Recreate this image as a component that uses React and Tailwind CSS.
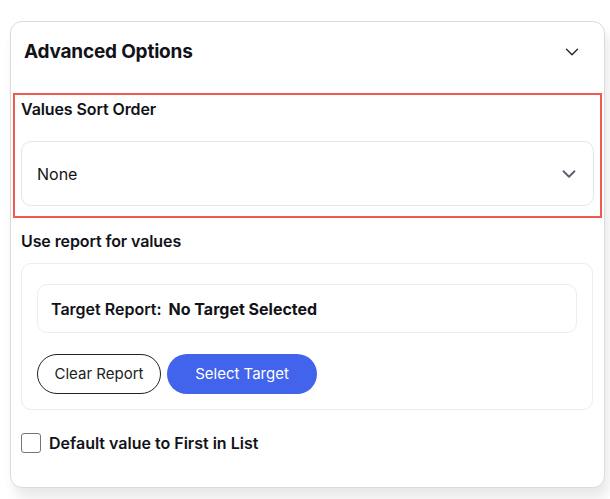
import React, { useState } from "react";
import { ChevronDown } from "lucide-react";

const App = () => {
  const [sortOrder] = useState("None");
  const [defaultFirst, setDefaultFirst] = useState(false);

  return (
    <div
      className="min-h-[499px] w-[610px] bg-white pt-[21px] pl-[10px] text-[#111318]"
      style={{ fontFamily: "Inter, 'Noto Sans', sans-serif" }}
    >
      <div className="w-[595px] rounded-xl border border-[#dadada] bg-white px-[10px] pb-[32px] shadow-[4px_10px_12px_rgba(0,0,0,0.09)]">
        {/* header */}
        <div className="flex h-[58px] items-center justify-between pt-[2px] pl-[3px] pr-[11px]">
          <h2 className="text-[19px] font-bold tracking-[-0.2px]">Advanced Options</h2>
          <ChevronDown size={22} strokeWidth={1.4} className="text-[#222]" />
        </div>

        {/* highlighted section */}
        <div className="-mx-[8px] mt-[13px] border-2 border-[#ef5b52] px-[6px] pt-[4px] pb-[10px]">
          <div className="text-[16px] font-semibold leading-5 tracking-[-0.1px]">Values Sort Order</div>
          <div className="mt-[22px] flex h-[65px] items-center justify-between rounded-[10px] border border-[#e6e6e6] pl-[15px] pr-[13px]">
            <span className="text-[16px]">{sortOrder}</span>
            <ChevronDown size={22} strokeWidth={2} className="text-[#5a606a]" />
          </div>
        </div>

        <div className="mt-[13px] text-[16px] font-semibold leading-5 tracking-[-0.1px]">Use report for values</div>

        <div className="mt-[12px] mr-[1px] rounded-[10px] border border-[#ececec] px-[15px] pt-[20px] pb-[15px]">
          <div className="flex h-[49px] items-center rounded-[10px] border border-[#ececec] px-[13px] text-[16px]">
            <span className="font-semibold">Target Report:</span>
            <span className="ml-[7px] font-bold">No Target Selected</span>
          </div>
          <div className="mt-[21px] flex gap-[6px]">
            <button className="h-[40px] w-[124px] rounded-full border border-[#222] text-[15px] text-[#222]">
              Clear Report
            </button>
            <button className="h-[40px] w-[150px] rounded-full bg-[#4263eb] text-[15px] text-white">
              Select Target
            </button>
          </div>
        </div>

        <label className="mt-[21px] flex items-center gap-[8px]">
          <input
            type="checkbox"
            checked={defaultFirst}
            onChange={(e) => setDefaultFirst(e.target.checked)}
            className="h-[20px] w-[20px] appearance-none rounded-[3px] border border-[#767676] bg-white"
          />
          <span className="text-[16px] font-semibold">Default value to First in List</span>
        </label>
      </div>
    </div>
  );
};

export default App;
